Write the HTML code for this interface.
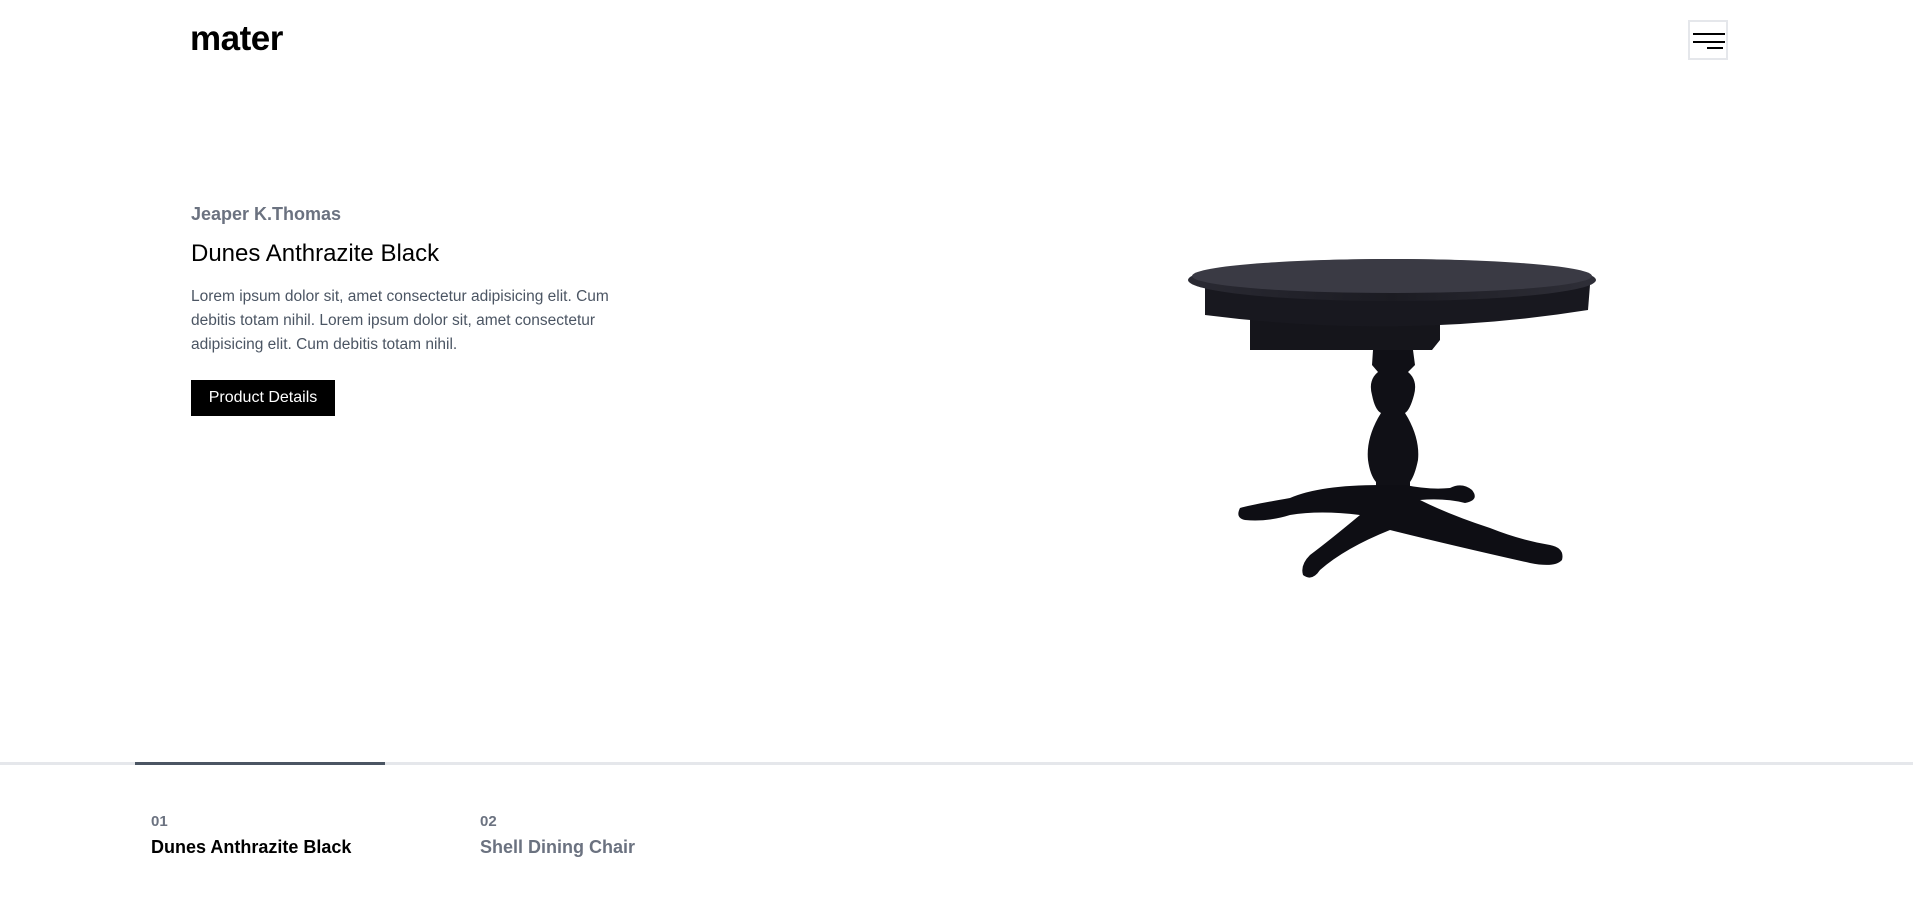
<!DOCTYPE html>
<html><head><meta charset="utf-8"><style>
*{margin:0;padding:0;box-sizing:border-box}
body{width:1913px;height:908px;background:#fff;font-family:"Liberation Sans",sans-serif;position:relative;overflow:hidden}
.abs{position:absolute;white-space:nowrap}
</style></head><body>
<div class="abs" style="left:190px;top:19px;font-size:35px;font-weight:bold;letter-spacing:-0.5px;color:#000">mater</div>
<div class="abs" style="left:1688px;top:20px;width:40px;height:40px;border:2px solid #e5e7eb">
  <div style="position:absolute;left:3px;top:11px;width:32px;height:2px;background:#000"></div>
  <div style="position:absolute;left:3px;top:19px;width:32px;height:2px;background:#000"></div>
  <div style="position:absolute;left:17px;top:25px;width:16px;height:2px;background:#000"></div>
</div>
<div class="abs" style="left:191px;top:204px;font-size:18px;font-weight:bold;color:#6b7280">Jeaper K.Thomas</div>
<div class="abs" style="left:191px;top:240px;font-size:24px;color:#000">Dunes Anthrazite Black</div>
<div class="abs" style="left:191px;top:285px;font-size:15.5px;line-height:24px;color:#4b5563;white-space:normal;width:460px">Lorem ipsum dolor sit, amet consectetur adipisicing elit. Cum debitis totam nihil. Lorem ipsum dolor sit, amet consectetur adipisicing elit. Cum debitis totam nihil.</div>
<div class="abs" style="left:191px;top:380px;width:144px;height:36px;background:#000;color:#fff;font-size:16px;line-height:36px;text-align:center">Product Details</div>
<svg class="abs" style="left:0;top:0" width="1913" height="908">
  <defs><linearGradient id="g" x1="0" x2="1"><stop offset="0" stop-color="#2a2a33"/><stop offset="0.5" stop-color="#1b1b22"/><stop offset="1" stop-color="#2f2f38"/></linearGradient></defs>
  <path d="M1250 320 L1440 320 L1440 340 L1432 350 L1250 350 Z" fill="#15151b"/>
  <path d="M1205 285 L1590 285 L1588 310 Q1400 340 1205 315 Z" fill="#18181f"/>
  <ellipse cx="1392" cy="280" rx="204" ry="21" fill="url(#g)"/>
  <ellipse cx="1392" cy="276" rx="200" ry="17" fill="#3a3a44"/>
  <path d="M1373 350 L1413 350 L1415 365 L1408 372 Q1418 380 1414 395 Q1410 410 1405 413 L1408 418 Q1420 440 1418 460 Q1415 475 1410 482 L1410 490 L1376 490 L1376 482 Q1370 475 1368 460 Q1366 440 1378 418 L1381 413 Q1375 410 1372 395 Q1368 380 1378 372 L1372 365 Z" fill="#101016"/>
  <path d="M1380 485 Q1320 485 1290 498 Q1250 505 1240 508 Q1235 518 1245 520 Q1268 522 1290 515 Q1320 510 1360 515 Q1330 540 1310 555 Q1300 565 1303 575 Q1312 582 1320 570 Q1345 548 1390 530 Q1450 545 1530 563 Q1555 568 1562 560 Q1565 548 1550 545 Q1520 540 1490 528 Q1450 515 1420 500 Q1445 498 1465 503 Q1480 500 1472 490 Q1462 482 1450 488 Q1430 490 1405 485 Z" fill="#0e0e14"/>
  <rect x="0" y="762" width="1913" height="3" fill="#e5e7eb"/>
  <rect x="135" y="762" width="250" height="3" fill="#4b5563"/>
</svg>
<div class="abs" style="left:151px;top:813px;font-size:15px;font-weight:bold;color:#6b7280">01</div>
<div class="abs" style="left:151px;top:837px;font-size:18px;font-weight:bold;color:#000">Dunes Anthrazite Black</div>
<div class="abs" style="left:480px;top:813px;font-size:15px;font-weight:bold;color:#6b7280">02</div>
<div class="abs" style="left:480px;top:837px;font-size:18px;font-weight:bold;color:#6b7280">Shell Dining Chair</div>
</body></html>
